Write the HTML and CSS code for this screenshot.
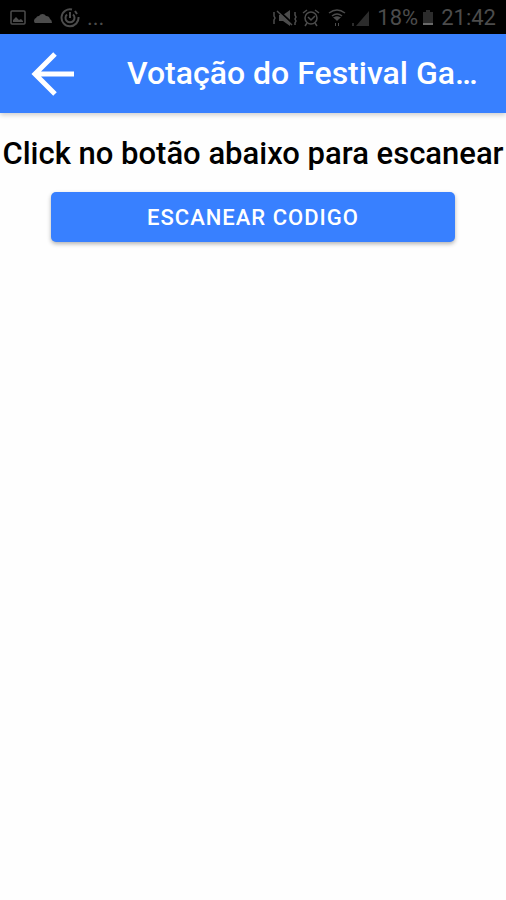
FILE: index.html
```html
<!DOCTYPE html>
<html lang="pt-br">
<head>
  <meta charset="UTF-8">
  <meta name="viewport" content="width=device-width, initial-scale=1.0">
  <title>Votação do Festival</title>
  <link rel="stylesheet" href="styles.css">
</head>
<body>

  <!-- Barra de status -->
  <div class="status-bar">
    <div class="status-icons">
      <svg width="16" height="16" viewBox="0 0 16 16">
        <rect x="1" y="1" width="14" height="13" rx="1" fill="none" stroke="currentColor" stroke-width="1.5"/>
        <path d="M3 12V10l3-3 3 3 2-1 2 2v1z" fill="currentColor"/>
      </svg>
      <svg width="20" height="16" viewBox="0 0 20 16">
        <path d="M2 13a3 3 0 0 1 1-5 3 3 0 0 1 3-2 4 4 0 0 1 7 0 4 4 0 0 1 4 3q2 1 2 4z" fill="currentColor"/>
      </svg>
      <svg width="20" height="20" viewBox="0 0 20 20" fill="none" stroke="currentColor" stroke-width="2">
        <path d="M12 1.500A8.500 8.500 0 1 0 18.500 9M15 3l2 3"/>
        <path d="M7 6.500a4.500 4.500 0 1 0 6 0M10 4v6"/>
      </svg>
      <span>...</span>
    </div>
    <div class="status-icons">
      <svg width="26" height="18" viewBox="0 0 26 18">
        <path d="M7 6h4l7-5v16l-7-5H7z" fill="currentColor"/>
        <path d="M6 1l15 14" stroke="#000" stroke-width="2"/>
        <path d="M5 2l15 14M2 3v4l1 2-1 2v4M23 3v3l1 2-1 2 1 2-1 2v2" fill="none" stroke="currentColor" stroke-width="1.500"/>
      </svg>
      <svg width="18" height="18" viewBox="0 0 18 18" fill="none" stroke="currentColor" stroke-width="1.500">
        <circle cx="9" cy="9" r="6"/>
        <path d="M6 8l3 3 4-4M1 4l4-3M17 4l-4-3M5 14l-2 3M13 14l2 3"/>
      </svg>
      <svg class="wifi" width="18" height="18" viewBox="0 0 18 18" fill="none" stroke="currentColor" stroke-width="1.500">
        <path d="M1 4q8-6 16 0M4 7q5-4 10 0M6 9q3-2 6 0"/>
        <path d="M5 8h8l-4 4zM7 14h1v3H7zM10 14h1v3h-1z" fill="currentColor" stroke="none"/>
      </svg>
      <svg class="dim" width="20" height="18" viewBox="0 0 20 18">
        <path d="M6 17L19 2v15zM2 14h2v3H2z" fill="currentColor"/>
      </svg>
      <span class="battery-text">18%</span>
      <svg class="dim" width="12" height="18" viewBox="0 0 12 18">
        <path d="M1 3h3V1h4v2h3v11H1z" fill="currentColor"/>
        <path d="M1 14h10v2H1z" fill="#6a6a6a"/>
      </svg>
      <span class="clock">21:42</span>
    </div>
  </div>

  <!-- Cabeçalho -->
  <header class="toolbar">
    <button type="button" class="back" aria-label="Voltar">
      <svg width="44" height="44" viewBox="0 0 44 44" fill="none" stroke="currentColor" stroke-width="5">
        <path d="M44 22H5M25 2L5 22l20 20"/>
      </svg>
    </button>
    <h1>Votação do Festival Ga…</h1>
  </header>

  <!-- Conteúdo -->
  <main>
    <h2>Click no botão abaixo para escanear</h2>
    <button type="button" class="scan">ESCANEAR CODIGO</button>
  </main>

</body>
</html>
```

FILE: styles.css
```css
* {
  box-sizing: border-box;
}

body {
  margin: 0;
  min-height: 100vh;
  background: #fefefe;
  color: #000;
  font-family: Roboto, sans-serif;
}

svg {
  display: block;
  flex: none;
}

.status-bar {
  display: flex;
  align-items: center;
  justify-content: space-between;
  height: 34px;
  padding: 2px 10px 0;
  background: #000;
  color: #4c4c4c;
  font-size: 22px;
  line-height: 32px;
}

.status-icons {
  display: flex;
  align-items: center;
  gap: 7px;
}

.status-icons + .status-icons {
  gap: 4px;
}

.wifi {
  margin-left: 4px;
}

.battery-text,
.clock {
  margin-left: 3px;
}

.dim {
  color: #2c2c2c;
}

.toolbar {
  display: flex;
  align-items: center;
  height: 79px;
  padding: 0 30px;
  background: #3880ff;
  color: #fff;
  box-shadow: 0 2px 5px rgba(0, 0, 0, 0.2);
}

.back {
  padding: 0;
  border: none;
  background: none;
  color: inherit;
  cursor: pointer;
}

h1 {
  flex: 1;
  margin: 0 0 0 53px;
  padding-bottom: 2px;
  font-size: 32px;
  font-weight: 500;
  line-height: 40px;
  white-space: nowrap;
}

main {
  display: flex;
  flex-direction: column;
  align-items: center;
  padding-top: 21px;
}

h2 {
  margin: 0;
  font-size: 31px;
  font-weight: 500;
  line-height: 40px;
  white-space: nowrap;
}

.scan {
  width: 80%;
  height: 50px;
  margin-top: 18px;
  border: none;
  border-radius: 5px;
  background: #3880ff;
  color: #fff;
  font-family: inherit;
  font-size: 22px;
  font-weight: 500;
  letter-spacing: 1px;
  cursor: pointer;
  box-shadow: 0 2px 4px rgba(0, 0, 0, 0.3);
}
```
